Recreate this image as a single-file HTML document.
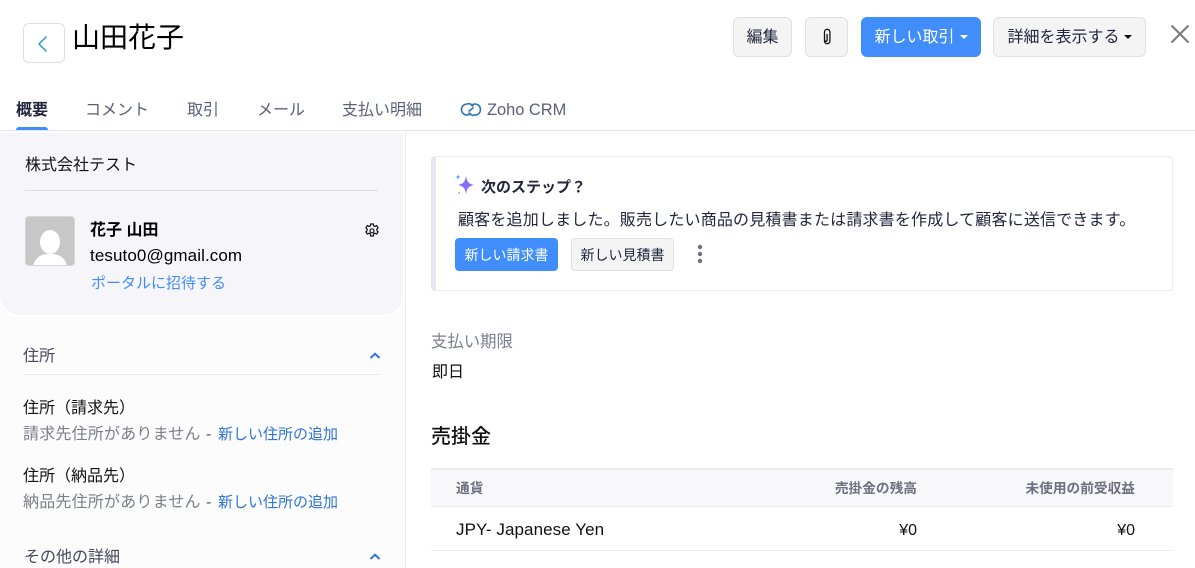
<!DOCTYPE html>
<html lang="ja"><head><meta charset="utf-8"><title>山田花子</title>
<style>
*{box-sizing:border-box}
html,body{margin:0;padding:0;width:1195px;height:568px;overflow:hidden;background:#fff}
body{position:relative;font-family:"Liberation Sans","Noto Sans CJK JP",sans-serif;color:#21263c;font-size:14px}
.a{position:absolute;white-space:nowrap;line-height:20px}
.btn{position:absolute;border:1px solid #e0e0e0;background:#f4f4f4;border-radius:6px;color:#21263c;display:flex;align-items:center;justify-content:center;white-space:nowrap}
.top{padding-bottom:4px;font-size:16px}
.pri{background:#408dfb;border-color:#408dfb;color:#fff}
.caret{display:inline-block;border-left:4px solid transparent;border-right:4px solid transparent;border-top:4px solid currentColor;margin-left:5px;margin-top:3px}
.tab{position:absolute;top:102px;color:#5b6078;font-size:16px;line-height:17px;white-space:nowrap}
.blue{color:#2f74de}.gray{color:#7d7f88}
.hr{position:absolute;height:1px}
</style></head><body>
<div class="a" style="left:23px;top:23px;width:42px;height:40px;border:1px solid #dcdde2;border-radius:6px"></div>
<svg class="a" style="left:36px;top:35px" width="14" height="18" viewBox="0 0 14 18"><path d="M10.500 1.500 3 9l7.500 7.500" fill="none" stroke="#1f8fd0" stroke-width="1.300"/></svg>
<div class="a" style="left:72px;top:20px;font-size:28px;line-height:36px;color:#000">山田花子</div>

<div class="btn top" style="left:733px;top:17px;width:59px;height:40px">編集</div>
<div class="btn" style="left:805px;top:17px;width:43px;height:40px"><svg width="12" height="18" viewBox="0 0 12 18"><path d="M3.500 5.500v7.500a2.700 2.700 0 0 0 5.400 0V4a2.700 2.700 0 0 0-5.400 0v8a1.300 1.300 0 0 0 2.600 0V6" fill="none" stroke="#111" stroke-width="1.300"/></svg></div>
<div class="btn pri top" style="left:861px;top:17px;width:120px;height:40px">新しい取引<span class="caret"></span></div>
<div class="btn top" style="left:993px;top:17px;width:153px;height:40px">詳細を表示する<span class="caret" style="color:#111;margin-left:4px"></span></div>
<svg class="a" style="left:1170px;top:24px" width="20" height="20" viewBox="0 0 20 20"><path d="M1.500 1.500l17 17M18.500 1.500l-17 17" stroke="#808080" stroke-width="2.200"/></svg>

<div class="tab" style="left:16px;color:#21263c;font-weight:700">概要</div>
<div class="tab" style="left:85px">コメント</div>
<div class="tab" style="left:187px">取引</div>
<div class="tab" style="left:257px">メール</div>
<div class="tab" style="left:342px">支払い明細</div>
<svg class="a" style="left:460px;top:102px" width="22" height="15" viewBox="0 0 22 15"><g fill="none" stroke="#2f74b8" stroke-width="1.600"><path d="M13.500 4.500A5.500 5.500 0 0 0 7 2 5.500 5.500 0 0 0 7 13c1.800 0 3-.7 4-1.800"/><path d="M8.500 10.500A5.500 5.500 0 0 0 15 13 5.500 5.500 0 0 0 15 2c-1.800 0-3 .7-4 1.800"/><path d="M8.500 9.500 13.500 5.500"/></g></svg>
<div class="tab" style="left:487px;font-size:16.400px">Zoho CRM</div>
<div class="a" style="left:16px;top:127px;width:32px;height:4px;background:#408dfb;border-radius:3px 3px 0 0"></div>
<div class="hr" style="left:0;top:130px;width:1195px;background:#e2e3e8"></div>

<div class="a" style="left:0;top:131px;width:406px;height:437px;background:#fcfcfd;border-right:1px solid #ebebef"></div>
<div class="a" style="left:0;top:133px;width:403px;height:182px;background:#f5f5fa;border-radius:0 0 20px 20px;box-shadow:0 0 0 2px #fff"></div>
<div class="a" style="left:25px;top:157px;font-size:16px;line-height:18px;color:#111">株式会社テスト</div>
<div class="hr" style="left:25px;top:190px;width:353px;background:#dcdce2"></div>
<div class="a" style="left:25px;top:216px;width:50px;height:50px;background:#c7c7c7;border:1px solid #d6d6d6;border-radius:4px;overflow:hidden"><div style="position:absolute;left:14px;top:13px;width:20px;height:24px;background:#fff;border-radius:50%"></div><div style="position:absolute;left:7px;top:37px;width:34px;height:20px;background:#fff;border-radius:14px 14px 0 0"></div></div>
<div class="a" style="left:90px;top:222px;font-size:16px;line-height:18px;font-weight:700;color:#000">花子 山田</div>
<div class="a" style="left:90px;top:246px;font-size:17px;color:#000;letter-spacing:.1px">tesuto0@gmail.com</div>
<div class="a blue" style="left:91px;top:275px;font-size:15px;line-height:18px;color:#408dfb">ポータルに招待する</div>
<svg class="a" style="left:363px;top:222px" width="18" height="18" viewBox="-1 -1 18 18"><path d="M6.700 1h2.600l.4 1.800 1.300.6 1.600-.9 1.500 2.200-1.200 1.300v1.600l1.200 1.300-1.500 2.200-1.600-.9-1.300.6-.4 2.200H6.700l-.4-2.200-1.300-.6-1.600.9-1.500-2.200 1.200-1.300V6L1.900 4.700l1.500-2.200 1.600.9 1.300-.6z" fill="none" stroke="#111" stroke-width="1.200"/><circle cx="8" cy="7.800" r="2" fill="none" stroke="#111" stroke-width="1.200"/></svg>

<div class="a" style="left:23px;top:348px;font-size:16px;line-height:18px;color:#444859">住所</div>
<svg class="a" style="left:369px;top:352px" width="12" height="8" viewBox="0 0 12 8"><path d="M1.500 6 6 1.800 10.500 6" fill="none" stroke="#2f74de" stroke-width="2"/></svg>
<div class="hr" style="left:23px;top:374px;width:357px;background:#eaeaee"></div>
<div class="a" style="left:23px;top:400px;font-size:16px;line-height:18px;color:#111">住所（請求先）</div>
<div class="a gray" style="left:23px;top:426px;font-size:16px;line-height:18px;letter-spacing:.2px">請求先住所がありません</div>
<div class="a" style="left:206px;top:426px;font-size:16px;line-height:18px;color:#555">-</div>
<div class="a blue" style="left:218px;top:426px;font-size:15px;line-height:18px">新しい住所の追加</div>
<div class="a" style="left:23px;top:468px;font-size:16px;line-height:18px;color:#111">住所（納品先）</div>
<div class="a gray" style="left:23px;top:494px;font-size:16px;line-height:18px;letter-spacing:.2px">納品先住所がありません</div>
<div class="a" style="left:206px;top:494px;font-size:16px;line-height:18px;color:#555">-</div>
<div class="a blue" style="left:218px;top:494px;font-size:15px;line-height:18px">新しい住所の追加</div>
<div class="a" style="left:24px;top:549px;font-size:16px;line-height:18px;color:#444859">その他の詳細</div>
<svg class="a" style="left:369px;top:553px" width="12" height="8" viewBox="0 0 12 8"><path d="M1.500 6 6 1.800 10.500 6" fill="none" stroke="#2f74de" stroke-width="2"/></svg>

<div class="a" style="left:431px;top:156px;width:742px;height:135px;border:1px solid #ebebf0;border-left:5px solid #e6e6f2;border-radius:4px"></div>
<svg class="a" style="left:455px;top:174px" width="20" height="22" viewBox="0 0 20 22"><defs><linearGradient id="g" x1="0" y1="0" x2="1" y2="1"><stop offset="0" stop-color="#5a7cf8"/><stop offset="1" stop-color="#b060f0"/></linearGradient></defs><path d="M11 2c1 6 2.500 7.800 8 9-5.500 1.200-7 3-8 9-1-6-2.500-7.800-8-9 5.500-1.200 7-3 8-9z" fill="url(#g)"/><path d="M3 0.500l.6 1.900 1.900.6-1.900.6L3 5.500l-.6-1.900L.5 3l1.900-.6z" fill="#408dfb"/><circle cx="4" cy="19" r="1" fill="#e58ae8"/></svg>
<div class="a" style="left:481px;top:179px;font-size:15px;line-height:18px;font-weight:700;color:#21263c">次のステップ？</div>
<div class="a" style="left:458px;top:212px;font-size:16px;line-height:18px;color:#21263c;letter-spacing:.18px">顧客を追加しました。販売したい商品の見積書または請求書を作成して顧客に送信できます。</div>
<div class="btn pri" style="left:455px;top:238px;width:103px;height:33px;font-size:14px;border-radius:4px">新しい請求書</div>
<div class="btn" style="left:571px;top:238px;width:103px;height:33px;font-size:14px;border-radius:4px">新しい見積書</div>
<svg class="a" style="left:695px;top:244px" width="10" height="20" viewBox="0 0 10 20"><g fill="#6c7084"><circle cx="5" cy="3" r="2.200"/><circle cx="5" cy="10" r="2.200"/><circle cx="5" cy="17" r="2.200"/></g></svg>

<div class="a" style="left:431px;top:332px;font-size:16.400px;color:#7b7f8e">支払い期限</div>
<div class="a" style="left:432px;top:364px;font-size:16px;line-height:18px;color:#111">即日</div>
<div class="a" style="left:431px;top:426px;font-size:20px;line-height:22px;color:#111;font-weight:500">売掛金</div>

<div class="a" style="left:431px;top:468px;width:742px;height:39px;background:#f8f8fb;border-top:2px solid #ebebf1;border-bottom:1px solid #ebebf1"></div>
<div class="a" style="left:456px;top:479px;font-size:13.700px;font-weight:700;color:#6c7080">通貨</div>
<div class="a" style="left:717px;width:200px;top:479px;text-align:right;font-size:13.700px;font-weight:700;color:#6c7080">売掛金の残高</div>
<div class="a" style="left:935px;width:200px;top:479px;text-align:right;font-size:13.700px;font-weight:700;color:#6c7080">未使用の前受収益</div>
<div class="a" style="left:456px;top:520px;font-size:17px;color:#111;letter-spacing:.08px">JPY- Japanese Yen</div>
<div class="a" style="left:717px;width:200px;top:520px;text-align:right;font-size:16px;color:#111;line-height:22px">¥0</div>
<div class="a" style="left:935px;width:200px;top:520px;text-align:right;font-size:16px;color:#111;line-height:22px">¥0</div>
<div class="hr" style="left:431px;top:550px;width:742px;background:#ebebf1"></div>
</body></html>
